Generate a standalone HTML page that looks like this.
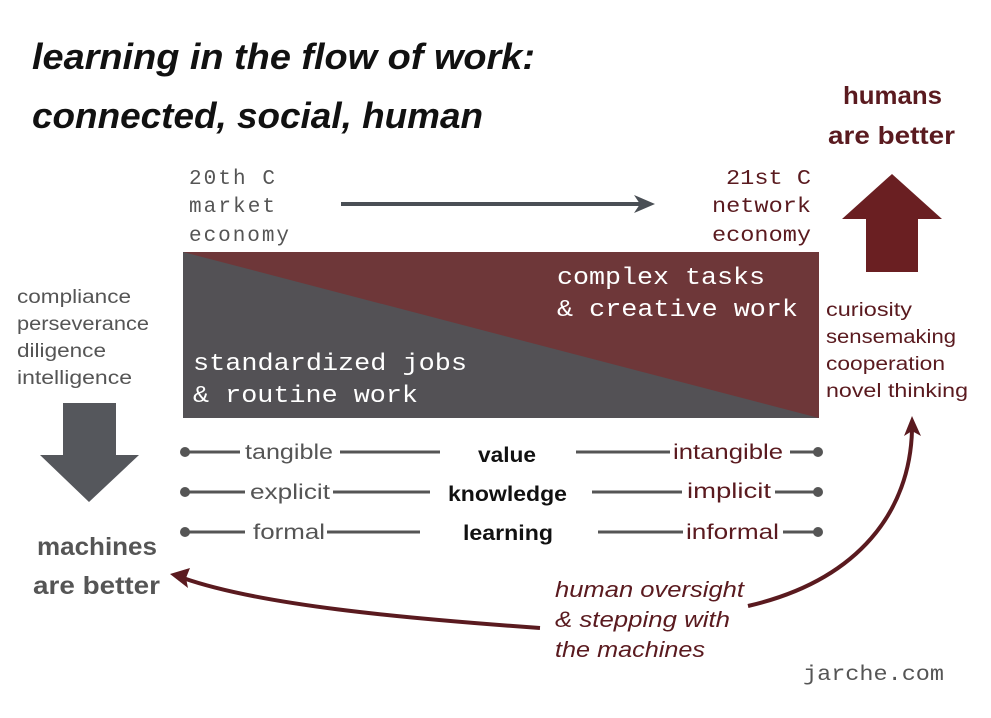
<!DOCTYPE html>
<html><head><meta charset="utf-8"><style>
html,body{margin:0;padding:0;background:#fff;}
svg{display:block;}
.s{font-family:"Liberation Sans",sans-serif;}
.m{font-family:"Liberation Mono",monospace;}
</style></head><body>
<svg width="991" height="718" viewBox="0 0 991 718" xmlns="http://www.w3.org/2000/svg">
<rect width="991" height="718" fill="#fff"/>
<g class="s" font-style="italic" font-weight="bold" font-size="36" fill="#111">
<text x="32" y="69" textLength="503" lengthAdjust="spacingAndGlyphs">learning in the flow of work:</text>
<text x="32" y="128" textLength="451" lengthAdjust="spacingAndGlyphs">connected, social, human</text>
</g>
<g class="s" font-weight="bold" font-size="25" fill="#5a1a1f">
<text x="843" y="104" textLength="99" lengthAdjust="spacingAndGlyphs">humans</text>
<text x="828" y="144" textLength="127" lengthAdjust="spacingAndGlyphs">are better</text>
</g>
<g class="m" font-size="21" fill="#555" lengthAdjust="spacingAndGlyphs">
<text x="189" y="184" textLength="86">20th C</text>
<text x="189" y="212" textLength="86">market</text>
<text x="189" y="241" textLength="100">economy</text>
</g>
<g class="m" font-size="21" fill="#5a1a1f">
<text x="726" y="184" textLength="85" lengthAdjust="spacingAndGlyphs">21st C</text>
<text x="712" y="212" textLength="99" lengthAdjust="spacingAndGlyphs">network</text>
<text x="712" y="241" textLength="99" lengthAdjust="spacingAndGlyphs">economy</text>
</g>
<line x1="341" y1="204" x2="640" y2="204" stroke="#4a4f55" stroke-width="4"/>
<polygon points="655,204 634,195 640,204 634,213" fill="#4a4f55"/>
<rect x="183" y="252" width="636" height="166" fill="#6e3739"/>
<polygon points="183,252 819,418 183,418" fill="#535155"/>
<g class="m" font-size="24" fill="#fff">
<text x="557" y="284" textLength="208" lengthAdjust="spacingAndGlyphs">complex tasks</text>
<text x="557" y="316" textLength="241" lengthAdjust="spacingAndGlyphs">&amp; creative work</text>
<text x="193" y="370" textLength="274" lengthAdjust="spacingAndGlyphs">standardized jobs</text>
<text x="193" y="402" textLength="225" lengthAdjust="spacingAndGlyphs">&amp; routine work</text>
</g>
<g class="s" font-size="19" fill="#555">
<text x="17" y="303" textLength="114" lengthAdjust="spacingAndGlyphs">compliance</text>
<text x="17" y="330" textLength="132" lengthAdjust="spacingAndGlyphs">perseverance</text>
<text x="17" y="357" textLength="89" lengthAdjust="spacingAndGlyphs">diligence</text>
<text x="17" y="384" textLength="115" lengthAdjust="spacingAndGlyphs">intelligence</text>
</g>
<g class="s" font-size="19" fill="#5a1a1f">
<text x="826" y="316" textLength="86" lengthAdjust="spacingAndGlyphs">curiosity</text>
<text x="826" y="343" textLength="130" lengthAdjust="spacingAndGlyphs">sensemaking</text>
<text x="826" y="370" textLength="119" lengthAdjust="spacingAndGlyphs">cooperation</text>
<text x="826" y="397" textLength="142" lengthAdjust="spacingAndGlyphs">novel thinking</text>
</g>
<polygon points="866,272 918,272 918,219 942,219 892,174 842,219 866,219" fill="#6a1f22"/>
<polygon points="63,403 116,403 116,455 139,455 89,502 40,455 63,455" fill="#55575c"/>
<g class="s" font-weight="bold" font-size="25" fill="#555">
<text x="37" y="555" textLength="120" lengthAdjust="spacingAndGlyphs">machines</text>
<text x="33" y="594" textLength="127" lengthAdjust="spacingAndGlyphs">are better</text>
</g>
<g stroke="#555" stroke-width="3">
<line x1="185" y1="452" x2="240" y2="452"/><line x1="340" y1="452" x2="440" y2="452"/>
<line x1="185" y1="492" x2="245" y2="492"/><line x1="333" y1="492" x2="430" y2="492"/>
<line x1="185" y1="532" x2="245" y2="532"/><line x1="327" y1="532" x2="420" y2="532"/>
<line x1="576" y1="452" x2="670" y2="452"/><line x1="790" y1="452" x2="818" y2="452"/>
<line x1="592" y1="492" x2="682" y2="492"/><line x1="775" y1="492" x2="818" y2="492"/>
<line x1="598" y1="532" x2="683" y2="532"/><line x1="783" y1="532" x2="818" y2="532"/>
</g>
<g fill="#555">
<circle cx="185" cy="452" r="5"/><circle cx="185" cy="492" r="5"/><circle cx="185" cy="532" r="5"/>
<circle cx="818" cy="452" r="5"/><circle cx="818" cy="492" r="5"/><circle cx="818" cy="532" r="5"/>
</g>
<g class="s" font-size="21" fill="#555">
<text x="245" y="459" textLength="88" lengthAdjust="spacingAndGlyphs">tangible</text>
<text x="250" y="499" textLength="80" lengthAdjust="spacingAndGlyphs">explicit</text>
<text x="253" y="539" textLength="72" lengthAdjust="spacingAndGlyphs">formal</text>
</g>
<g class="s" font-size="21" fill="#5a1a1f">
<text x="673" y="459" textLength="110" lengthAdjust="spacingAndGlyphs">intangible</text>
<text x="687" y="498" textLength="84" lengthAdjust="spacingAndGlyphs">implicit</text>
<text x="686" y="539" textLength="93" lengthAdjust="spacingAndGlyphs">informal</text>
</g>
<g class="s" font-weight="bold" font-size="21" fill="#111">
<text x="478" y="462" textLength="58" lengthAdjust="spacingAndGlyphs">value</text>
<text x="448" y="501" textLength="119" lengthAdjust="spacingAndGlyphs">knowledge</text>
<text x="463" y="540" textLength="90" lengthAdjust="spacingAndGlyphs">learning</text>
</g>
<path d="M540,628 C400,618 260,605 183,578" fill="none" stroke="#5a1a1f" stroke-width="4"/>
<polygon points="170,574 190,568 186,578 188,588" fill="#5a1a1f"/>
<path d="M748,606 C860,580 910,510 912,430" fill="none" stroke="#5a1a1f" stroke-width="4"/>
<polygon points="912,416 904,436 912,431 921,436" fill="#5a1a1f"/>
<g class="s" font-style="italic" font-size="22" fill="#5a1a1f">
<text x="555" y="597" textLength="189" lengthAdjust="spacingAndGlyphs">human oversight</text>
<text x="555" y="627" textLength="175" lengthAdjust="spacingAndGlyphs">&amp; stepping with</text>
<text x="555" y="657" textLength="150" lengthAdjust="spacingAndGlyphs">the machines</text>
</g>
<text x="803" y="680" class="m" font-size="21" fill="#555" textLength="141" lengthAdjust="spacingAndGlyphs">jarche.com</text>
</svg>
</body></html>
